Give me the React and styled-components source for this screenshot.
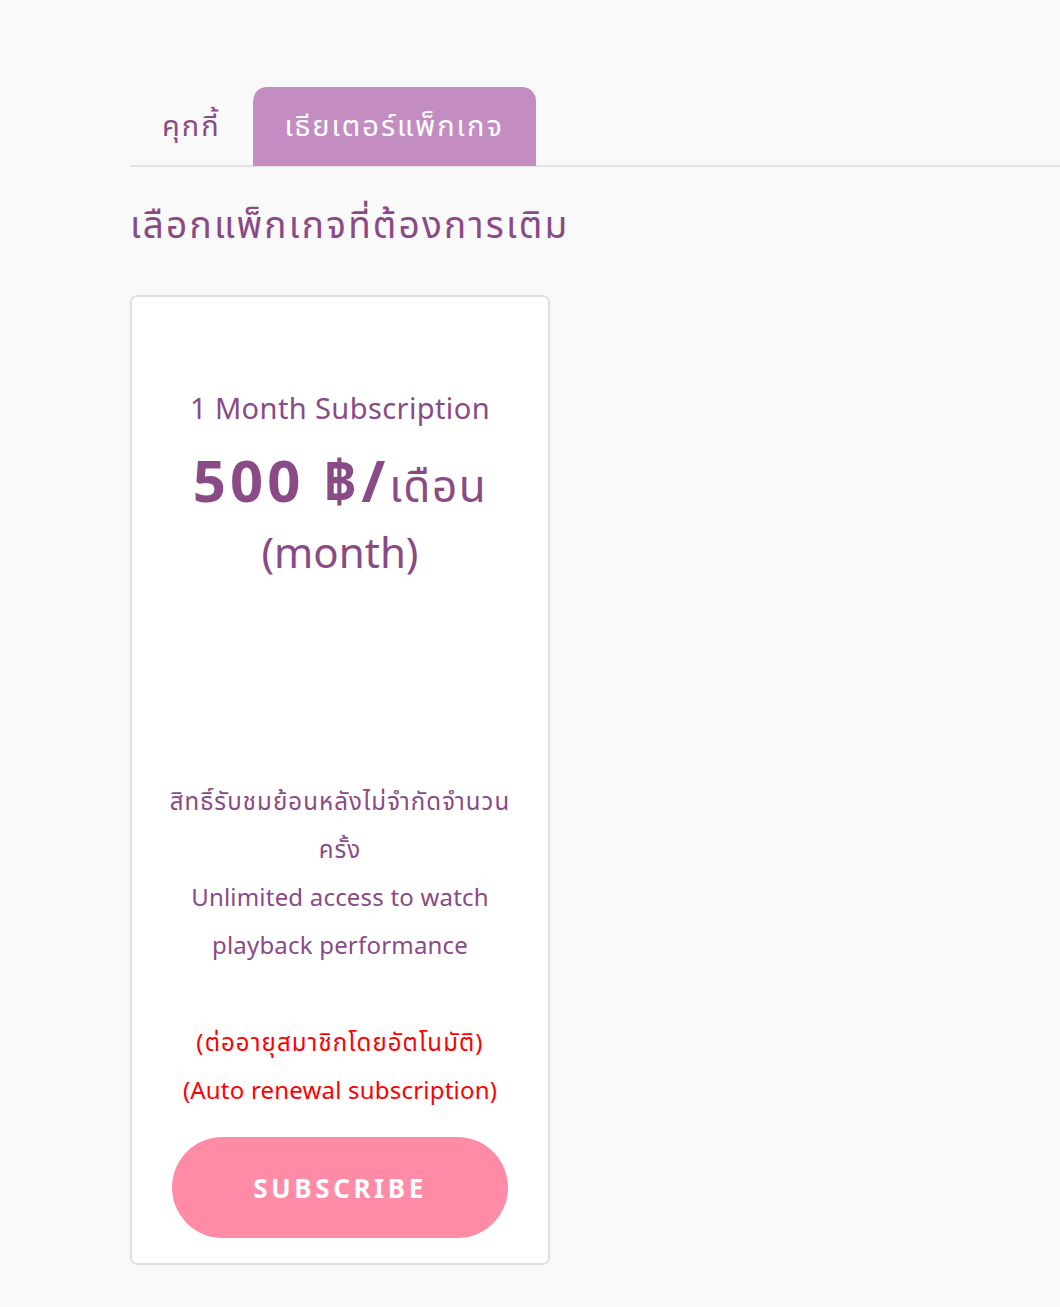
import React from "react";
import styled, { createGlobalStyle } from "styled-components";

const Global = createGlobalStyle`
  html, body { margin: 0; padding: 0; background: #f9f9f9; }
  body { font-family: "Noto Sans", "Noto Sans Thai", "Open Sans", sans-serif; color: #8a4a86; }
`;

const Page = styled.div`
  padding: 87px 0 40px 130px;
  min-height: 1307px;
  box-sizing: border-box;
`;

const TabBar = styled.div`
  display: flex;
  align-items: flex-end;
  border-bottom: 2px solid #e3e3e5;
`;

const Tab = styled.button`
  border: none;
  font-family: inherit;
  font-size: 29px;
  letter-spacing: 2px;
  height: 79px;
  padding: 0 32px 0 32px;
  border-radius: 14px 14px 0 0;
  background: ${(p) => (p.$active ? "#c48dc2" : "transparent")};
  color: ${(p) => (p.$active ? "#ffffff" : "#8a4a86")};
  cursor: pointer;
  margin-bottom: -1px;
`;

const Heading = styled.h2`
  margin: 35px 0 49px;
  font-size: 37px;
  letter-spacing: 2.2px;
  font-weight: 400;
  line-height: 44px;
  color: #8a4a86;
`;

const Card = styled.div`
  width: 420px;
  box-sizing: border-box;
  background: #fff;
  border: 2px solid #e0e0e0;
  border-radius: 7px;
  padding: 89px 30px 25px;
  display: flex;
  flex-direction: column;
  align-items: center;
  text-align: center;
`;

const Title = styled.div`
  font-size: 29px;
  letter-spacing: 0.4px;
  line-height: 44px;
`;

const Price = styled.div`
  margin-top: 17px;
  line-height: 66px;
  font-size: 42px;
`;

const Amount = styled.span`
  font-size: 58px;
  font-weight: 700;
  letter-spacing: 4px;
`;

const Per = styled.span`
  font-size: 44px;
  letter-spacing: 1.5px;
`;

const Features = styled.div`
  margin-top: 192px;
  font-size: 24px;
  letter-spacing: 0.2px;
  line-height: 48px;
`;

const Thai = styled.span`
  letter-spacing: 1.1px;
`;

const Note = styled(Features)`
  margin-top: 49px;
  color: #ff0000;
`;

const Subscribe = styled.button`
  margin-top: 23px;
  width: 336px;
  height: 101px;
  border: none;
  border-radius: 51px;
  background: #ff8ba6;
  color: #fff;
  font-family: inherit;
  font-size: 26px;
  font-weight: 700;
  letter-spacing: 3.6px;
  cursor: pointer;
`;

export default function App() {
  return (
    <>
      <Global />
      <Page>
        <TabBar>
          <Tab>คุกกี้</Tab>
          <Tab $active>เธียเตอร์แพ็กเกจ</Tab>
        </TabBar>
        <Heading>เลือกแพ็กเกจที่ต้องการเติม</Heading>
        <Card>
          <Title>1 Month Subscription</Title>
          <Price>
            <Amount>500 ฿/</Amount>
            <Per>เดือน</Per>
            <br />
            (month)
          </Price>
          <Features>
            <Thai>สิทธิ์รับชมย้อนหลังไม่จำกัดจำนวนครั้ง</Thai>
            <br />
            Unlimited access to watch playback performance
          </Features>
          <Note>
            <Thai>(ต่ออายุสมาชิกโดยอัตโนมัติ)</Thai>
            <br />
            (Auto renewal subscription)
          </Note>
          <Subscribe>SUBSCRIBE</Subscribe>
        </Card>
      </Page>
    </>
  );
}
